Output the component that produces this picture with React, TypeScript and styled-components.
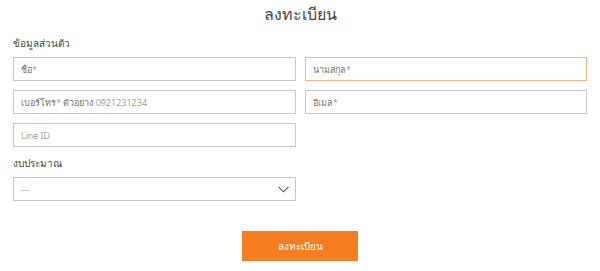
import React from "react";
import styled, { createGlobalStyle } from "styled-components";

const GlobalStyle = createGlobalStyle`
  body {
    margin: 0;
    background: #ffffff;
    font-family: "Noto Sans", "DejaVu Sans", sans-serif;
  }
`;

const App = () => {
  return (
    <Page>
      <GlobalStyle />
      <Title>ลงทะเบียน</Title>
      <Section>ข้อมูลส่วนตัว</Section>
      <Grid>
        <Field placeholder="ชื่อ*" />
        <Field placeholder="นามสกุล*" focus />
        <Field placeholder="เบอร์โทร* ตัวอย่าง 0921231234" />
        <Field placeholder="อีเมล*" />
        <Field placeholder="Line ID" />
      </Grid>
      <Section gap={9}>งบประมาณ</Section>
      <Grid>
        <SelectBox>
          <span>---</span>
          <svg width="11" height="7" viewBox="0 0 11 7">
            <path d="M0.5 0.8 L5.5 5.8 L10.5 0.8" fill="none" stroke="#555" strokeWidth="1.1" />
          </svg>
        </SelectBox>
      </Grid>
      <Footer>
        <Button>ลงทะเบียน</Button>
      </Footer>
    </Page>
  );
};

export default App;

const Page = styled.div`
  width: 600px;
  height: 271px;
  padding: 0 13px;
  box-sizing: border-box;
`;

const Title = styled.div`
  text-align: center;
  font-size: 16px;
  font-weight: 300;
  color: #444;
  line-height: 28px;
`;

const Section = styled.div<{ gap?: number }>`
  font-size: 10px;
  font-weight: 300;
  color: #444;
  line-height: 14px;
  margin-top: ${(p) => p.gap ?? 8}px;
  margin-bottom: 7px;
`;

const Grid = styled.div`
  display: grid;
  grid-template-columns: 283px 282px;
  column-gap: 9px;
  row-gap: 9px;
`;

const Field = styled.input<{ focus?: boolean }>`
  height: 24px;
  box-sizing: border-box;
  border: 1px solid ${(p) => (p.focus ? "#f6b27c" : "#c8c8c8")};
  outline: none;
  padding: 0 7px;
  font-family: inherit;
  font-size: 9px;
  font-weight: 300;
  color: #333;
  background: #fff;

  ::placeholder {
    color: #a8a8a8;
  }
`;

const SelectBox = styled.div`
  height: 24px;
  box-sizing: border-box;
  border: 1px solid #c8c8c8;
  display: flex;
  align-items: center;
  justify-content: space-between;
  padding: 0 6px 0 7px;
  font-size: 9px;
  color: #aaa;
`;

const Footer = styled.div`
  display: flex;
  justify-content: center;
  margin-top: 30px;
`;

const Button = styled.button`
  width: 116px;
  height: 30px;
  border: none;
  background: #f47e20;
  color: #fff;
  font-family: inherit;
  font-size: 10px;
  font-weight: 300;
  cursor: pointer;
`;
